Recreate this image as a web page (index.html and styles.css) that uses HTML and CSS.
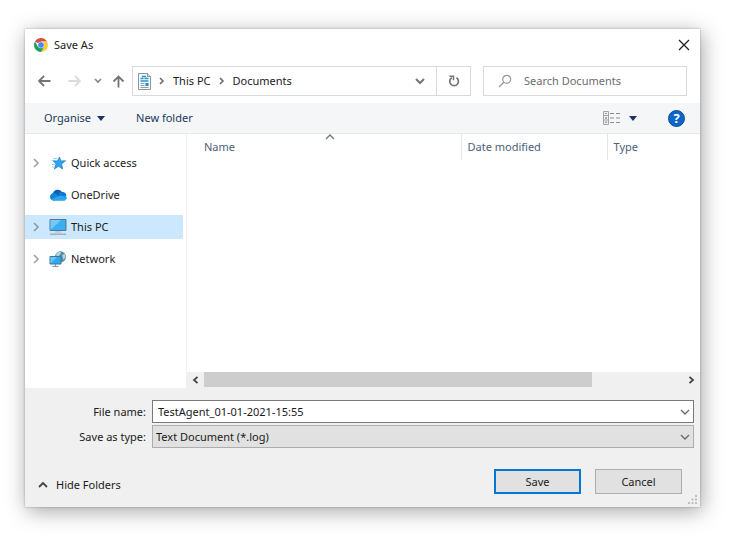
FILE: index.html
```html
<!DOCTYPE html>
<html lang="en">
<head>
<meta charset="utf-8">
<title>Save As</title>
<link rel="stylesheet" href="styles.css">
</head>
<body>
<main class="dialog">
  <header class="titlebar">
    <svg class="logo" width="14" height="14" viewBox="0 0 28 28" aria-hidden="true">
      <path d="M14 14 1.9 7A14 14 0 0 1 26.1 7H14z" fill="#dd4b3e"/>
      <path d="M26.1 7A14 14 0 0 1 14 28l6-10.5L20 10.5 14 7z" fill="#fccd3f"/>
      <path d="M1.9 7A14 14 0 0 0 14 28l6.1-10.5L14 14 8 17.5z" fill="#1fa05a"/>
      <circle cx="14" cy="14" r="6.5" fill="#dfe9fb"/>
      <circle cx="14" cy="14" r="5.500" fill="#4a86ee"/>
    </svg>
    <h1 class="title">Save As</h1>
    <button class="plain close" aria-label="Close">
      <svg width="12" height="12" viewBox="0 0 12 12"><path d="M1 1l10 10M11 1L1 11" stroke="#222" stroke-width="1.300" fill="none"/></svg>
    </button>
  </header>

  <nav class="address-row" aria-label="Location">
    <button class="plain nav-button" aria-label="Back">
      <svg width="14" height="12" viewBox="0 0 14 12"><path d="M6 1L1 6l5 5M1.500 6h11" stroke="#757575" stroke-width="1.800" fill="none"/></svg>
    </button>
    <button class="plain nav-button forward" aria-label="Forward">
      <svg width="14" height="12" viewBox="0 0 14 12"><path d="M7 1l5 5-5 5M12 6H.5" stroke="#dcdcdc" stroke-width="1.800" fill="none"/></svg>
    </button>
    <button class="plain nav-button recent" aria-label="Recent locations">
      <svg width="8" height="6" viewBox="0 0 8 6"><path d="M1 1l3 3 3-3" stroke="#858585" stroke-width="1.600" fill="none"/></svg>
    </button>
    <button class="plain nav-button" aria-label="Up">
      <svg width="13" height="13" viewBox="0 0 13 13"><path d="M1.500 6.500l5-5 5 5M6.500 1.500v11" stroke="#757575" stroke-width="1.800" fill="none"/></svg>
    </button>
    <div class="address">
      <svg class="doc-icon" width="13" height="17" viewBox="0 0 13 17" aria-hidden="true">
        <path d="M.5.5h9l3 3v13H.5z" fill="#f5f8fa" stroke="#8c979e"/>
        <path d="M9.500.5v3h3" fill="#ddd" stroke="#8c979e"/>
        <path d="M4 3.500h4M2.500 5.500h3M6.500 5.500h4M2.500 8h8" stroke="#2196d8" stroke-width="1.500"/>
        <path d="M2.500 10.500h4M2.500 12.500h4M2.500 14.500h8" stroke="#8aa0ad"/>
        <path d="M7.500 10h3v3h-3z" fill="#3a83a9"/>
      </svg>
      <svg class="crumb-arrow" width="6" height="8" viewBox="0 0 6 8" aria-hidden="true"><path d="M1 1l3 3-3 3" stroke="#666" stroke-width="1.500" fill="none"/></svg>
      <a class="crumb" href="#pc">This PC</a>
      <svg class="crumb-arrow" width="6" height="8" viewBox="0 0 6 8" aria-hidden="true"><path d="M1 1l3 3-3 3" stroke="#666" stroke-width="1.500" fill="none"/></svg>
      <a class="crumb" href="#documents">Documents</a>
      <button class="plain history" aria-label="Previous locations">
        <svg width="10" height="7" viewBox="0 0 10 7"><path d="M1 1l4 4 4-4" stroke="#757575" stroke-width="2" fill="none"/></svg>
      </button>
      <button class="plain refresh" aria-label="Refresh">
        <svg width="12" height="12" viewBox="0 0 12 12"><path d="M8.500 2.800A4.300 4.300 0 1 1 3.700 2.800" stroke="#757575" stroke-width="1.700" fill="none"/><path d="M1.500 1.200h4v4" stroke="#757575" stroke-width="1.500" fill="none"/></svg>
      </button>
    </div>
    <label class="search">
      <svg width="14" height="14" viewBox="0 0 14 14" aria-hidden="true"><circle cx="8.700" cy="5.300" r="4" stroke="#999" stroke-width="1.200" fill="none"/><path d="M5.800 8.200L1 13" stroke="#999" stroke-width="1.300"/></svg>
      <input type="search" placeholder="Search Documents" aria-label="Search Documents">
    </label>
  </nav>

  <div class="toolbar">
    <button class="plain tool">Organise
      <svg width="8" height="5" viewBox="0 0 8 5" aria-hidden="true"><path d="M0 0h8L4 5z" fill="#1c3566"/></svg>
    </button>
    <button class="plain tool">New folder</button>
    <button class="plain tool view" aria-label="Change view">
      <svg width="18" height="14" viewBox="0 0 18 14" aria-hidden="true">
        <path d="M.5.5h5v13h-5zM.5 4.500h5M.5 9h5" fill="#f1f1f1" stroke="#a3a3a3"/>
        <path d="M2 7h2" stroke="#6a9bd0" stroke-width="1.500"/><path d="M2 11.300h2" stroke="#d58a7a" stroke-width="1.500"/><path d="M2 2.500h2" stroke="#999"/>
        <path d="M7 2.500h4M13 2.500h4M7 7h4M13 7h4M7 11.500h4M13 11.500h4" stroke="#8c8c8c" stroke-width="1.200"/>
      </svg>
      <svg width="8" height="5" viewBox="0 0 8 5" aria-hidden="true"><path d="M0 0h8L4 5z" fill="#1c3566"/></svg>
    </button>
    <button class="help" aria-label="Help">?</button>
  </div>

  <div class="browser">
    <ul class="tree">
      <li><a class="node" href="#quick">
        <svg class="expand" width="7" height="10" viewBox="0 0 7 10" aria-hidden="true"><path d="M1 1l4 4-4 4" stroke="#a0a0a0" stroke-width="1.600" fill="none"/></svg>
        <svg class="place" width="18" height="16" viewBox="0 0 18 16" aria-hidden="true">
          <path d="M10.500 2l1.300 4 4.700-.2-3.900 3.100 1 5.100-4-2.700-4.200 2.700 1.700-5L4 5.800l4.500.2z" fill="#2fa3ee" stroke="#1c86d1" stroke-width=".8"/>
          <path d="M4 3.500h4M2.500 5.500h2M3 9.500h3M3 12h2" stroke="#9bd3f5"/>
        </svg>
        Quick access</a></li>
      <li><a class="node" href="#onedrive">
        <span class="expand"></span>
        <svg class="place" width="18" height="16" viewBox="0 0 18 16" aria-hidden="true">
          <path d="M4.500 13.500a4 4 0 0 1-.5-7.400 5 5 0 0 1 9-1.100 4.300 4.300 0 0 1 4 4.500z" fill="#0a5fb8"/>
          <path d="M9 6.500A4.800 4.800 0 0 1 13.500 5 4.300 4.300 0 0 1 17.400 9L12 10z" fill="#1377d1"/>
          <path d="M1 11a4 4 0 0 1 5.500-4.500L16.500 13a3 3 0 0 1-1.500.5H4.500A4 4 0 0 1 1 11z" fill="#1583d6"/>
          <path d="M2 12.500l9-4 6.600 1.200A2.800 2.800 0 0 1 15 13.500H4.500A4 4 0 0 1 2 12.500z" fill="#28a8ea"/>
        </svg>
        OneDrive</a></li>
      <li><a class="node selected" href="#pc" aria-current="true">
        <svg class="expand" width="7" height="10" viewBox="0 0 7 10" aria-hidden="true"><path d="M1 1l4 4-4 4" stroke="#8b9aa7" stroke-width="1.600" fill="none"/></svg>
        <svg class="place" width="18" height="16" viewBox="0 0 18 16" aria-hidden="true">
          <path d="M1 .5h16v11H1z" fill="#3aaef0" stroke="#54788f"/>
          <path d="M1.500 11L12 1H1.500z" fill="#72caf7"/>
          <path d="M6 13h6" stroke="#a9bac5"/><path d="M1 15.200h16" stroke="#98a8b2" stroke-width="1.300"/>
        </svg>
        This PC</a></li>
      <li><a class="node" href="#network">
        <svg class="expand" width="7" height="10" viewBox="0 0 7 10" aria-hidden="true"><path d="M1 1l4 4-4 4" stroke="#a0a0a0" stroke-width="1.600" fill="none"/></svg>
        <svg class="place" width="18" height="16" viewBox="0 0 18 16" aria-hidden="true">
          <circle cx="11.500" cy="5.800" r="5.500" fill="#568ba9"/>
          <path d="M7 3q3-3 5-2l-1 3-3 2zM13 4l3-1 .5 3-2 3z" fill="#b5d6df"/>
          <path d="M1 5.500h11v7.500H1z" fill="#32a9ef" stroke="#3f7795"/>
          <path d="M1.500 12.500L8 6H1.500z" fill="#68c5f7"/>
          <path d="M6.500 13v2M3.500 15.400h6" stroke="#7993a2"/>
        </svg>
        Network</a></li>
    </ul>

    <section class="listing" aria-label="Files">
      <table class="files">
        <thead>
          <tr>
            <th class="col-name" scope="col" aria-sort="ascending">Name
              <svg class="sort" width="10" height="6" viewBox="0 0 10 6" aria-hidden="true"><path d="M1 5l4-4 4 4" stroke="#777" stroke-width="1.300" fill="none"/></svg>
            </th>
            <th class="col-date" scope="col">Date modified</th>
            <th scope="col">Type</th>
          </tr>
        </thead>
      </table>
      <div class="scrollbar">
        <button class="plain scroll-step" aria-label="Scroll left"><svg width="7" height="8" viewBox="0 0 7 8"><path d="M5.500.8L2 4l3.500 3.200" stroke="#444" stroke-width="1.800" fill="none"/></svg></button>
        <div class="track"><div class="thumb"></div></div>
        <button class="plain scroll-step" aria-label="Scroll right"><svg width="7" height="8" viewBox="0 0 7 8"><path d="M1.500.8L5 4 1.500 7.200" stroke="#444" stroke-width="1.800" fill="none"/></svg></button>
      </div>
    </section>
  </div>

  <form class="footer">
    <div class="fields">
      <label for="filename">File name:</label>
      <div class="combo">
        <input id="filename" type="text" value="TestAgent_01-01-2021-15:55">
        <svg class="drop" width="10" height="6" viewBox="0 0 10 6" aria-hidden="true"><path d="M1 1l4 4 4-4" stroke="#666" stroke-width="1.300" fill="none"/></svg>
      </div>
      <label for="filetype">Save as type:</label>
      <div class="combo">
        <select id="filetype"><option>Text Document (*.log)</option></select>
        <svg class="drop" width="10" height="6" viewBox="0 0 10 6" aria-hidden="true"><path d="M1 1l4 4 4-4" stroke="#666" stroke-width="1.300" fill="none"/></svg>
      </div>
    </div>
    <div class="actions">
      <button type="button" class="plain hide-folders">
        <svg width="10" height="7" viewBox="0 0 10 7" aria-hidden="true"><path d="M1 6l4-4 4 4" stroke="#444" stroke-width="1.800" fill="none"/></svg>
        Hide Folders
      </button>
      <button type="submit" class="push primary">Save</button>
      <button type="button" class="push">Cancel</button>
    </div>
    <svg class="grip" width="9" height="9" viewBox="0 0 9 9" aria-hidden="true"><path d="M7 0h2v2H7zM3.500 3.500h2v2h-2zM7 3.500h2v2H7zM0 7h2v2H0zM3.500 7h2v2h-2zM7 7h2v2H7z" fill="#bdbdbd"/></svg>
  </form>
</main>
</body>
</html>
```
FILE: styles.css
```css
* {
  box-sizing: border-box;
}

body {
  margin: 0;
  padding: 29px 31px 34px 25px;
  background: #fff;
  color: #1a1a1a;
  font: 11px/16px "Noto Sans", "Open Sans", sans-serif;
}

button,
input,
select {
  font: inherit;
  color: inherit;
}

a {
  color: inherit;
  text-decoration: none;
}

svg {
  display: block;
  flex: none;
}

.plain {
  display: flex;
  align-items: center;
  justify-content: center;
  padding: 0;
  border: 0;
  background: none;
}

.dialog {
  background: #fff;
  box-shadow: 0 0 2px rgba(0, 0, 0, 0.3), 2px 4px 20px rgba(0, 0, 0, 0.36);
}

.titlebar {
  display: flex;
  align-items: center;
  gap: 6px;
  height: 31px;
  padding: 0 10px 0 9px;
}

.title {
  margin: 0;
  font-size: 11px;
  font-weight: 400;
}

.close {
  margin-left: auto;
}

.address-row {
  display: flex;
  align-items: center;
  padding: 6px 13px 7px 13px;
}

.forward {
  margin-left: 16px;
}

.recent {
  margin: 0 10px 0 12px;
}

.address {
  display: flex;
  flex: 1;
  align-items: center;
  height: 30px;
  margin: 0 12px 0 7px;
  padding-left: 5px;
  border: 1px solid #d9d9d9;
}

.crumb-arrow {
  margin: 0 8px;
}

.history {
  margin-left: auto;
  width: 32px;
  height: 28px;
}

.refresh {
  width: 34px;
  height: 28px;
  border-left: 1px solid #d9d9d9;
}

.search {
  display: flex;
  align-items: center;
  gap: 12px;
  width: 204px;
  height: 30px;
  padding: 0 14px;
  border: 1px solid #d9d9d9;
}

.search input {
  flex: 1;
  min-width: 0;
  padding: 0;
  border: 0;
  outline: 0;
  background: none;
}

.search input::placeholder {
  color: #6d6d6d;
}

.toolbar {
  display: flex;
  align-items: center;
  gap: 31px;
  height: 31px;
  padding: 0 15px 0 19px;
  border-bottom: 1px solid #e6e9ec;
  background: #f4f6f8;
  color: #1e395b;
}

.tool {
  gap: 6px;
}

.view {
  gap: 8px;
  margin-left: auto;
}

.help {
  width: 17px;
  height: 17px;
  padding: 0;
  border: 1px solid #0b4c94;
  border-radius: 50%;
  background: #0a66c8;
  color: #fff;
  font-size: 13px;
  font-weight: 700;
  line-height: 15px;
}

.browser {
  display: flex;
  height: 254px;
}

.tree {
  display: flex;
  flex-direction: column;
  gap: 8px;
  width: 162px;
  margin: 0;
  padding: 17px 3px 0 0;
  border-right: 1px solid #f0f0f0;
  list-style: none;
}

.node {
  display: flex;
  align-items: center;
  height: 24px;
  padding-left: 8px;
}

.selected {
  background: #cce8ff;
}

.expand {
  width: 7px;
}

.place {
  margin: 0 4px 0 9px;
}

.listing {
  display: flex;
  flex: 1;
  flex-direction: column;
  justify-content: space-between;
}

.files {
  width: 100%;
  border-collapse: collapse;
  table-layout: fixed;
}

.files th {
  position: relative;
  height: 26px;
  padding: 0 0 0 6px;
  border-left: 1px solid #e5e5e5;
  color: #4c607a;
  font-weight: 400;
  text-align: left;
}

.files .col-name {
  width: 274px;
  padding-left: 17px;
  border-left: 0;
}

.col-date {
  width: 146px;
}

.sort {
  position: absolute;
  top: 0;
  left: calc(50% + 1px);
}

.scrollbar {
  display: flex;
  height: 16px;
  padding-bottom: 1px;
  background: #f0f0f0;
}

.scroll-step {
  width: 17px;
}

.track {
  flex: 1;
}

.thumb {
  width: 81%;
  height: 100%;
  background: #cdcdcd;
}

.footer {
  position: relative;
  padding: 12px 6px 13px 13px;
  background: #f0f0f0;
}

.fields {
  display: grid;
  grid-template-columns: 108px 1fr;
  column-gap: 6px;
  row-gap: 2px;
  align-items: center;
}

.fields label {
  text-align: right;
}

.combo {
  position: relative;
}

.combo input,
.combo select {
  display: block;
  width: 100%;
  height: 23px;
  margin: 0;
  padding: 0 20px 0 5px;
  border: 1px solid #7a7a7a;
  border-radius: 0;
  background: #fff;
  appearance: none;
}

.combo select {
  padding-left: 3px;
  border-color: #adadad;
  background: #e1e1e1;
}

.drop {
  position: absolute;
  top: 9px;
  right: 4px;
}

.actions {
  display: flex;
  gap: 14px;
  align-items: center;
  padding: 21px 12px 0 0;
}

.hide-folders {
  gap: 8px;
  margin-right: auto;
  padding-top: 6px;
}

.push {
  width: 87px;
  height: 25px;
  padding: 0;
  border: 1px solid #adadad;
  background: #e1e1e1;
}

.primary {
  border: 2px solid #0078d7;
}

.grip {
  position: absolute;
  right: 3px;
  bottom: 3px;
}
```
